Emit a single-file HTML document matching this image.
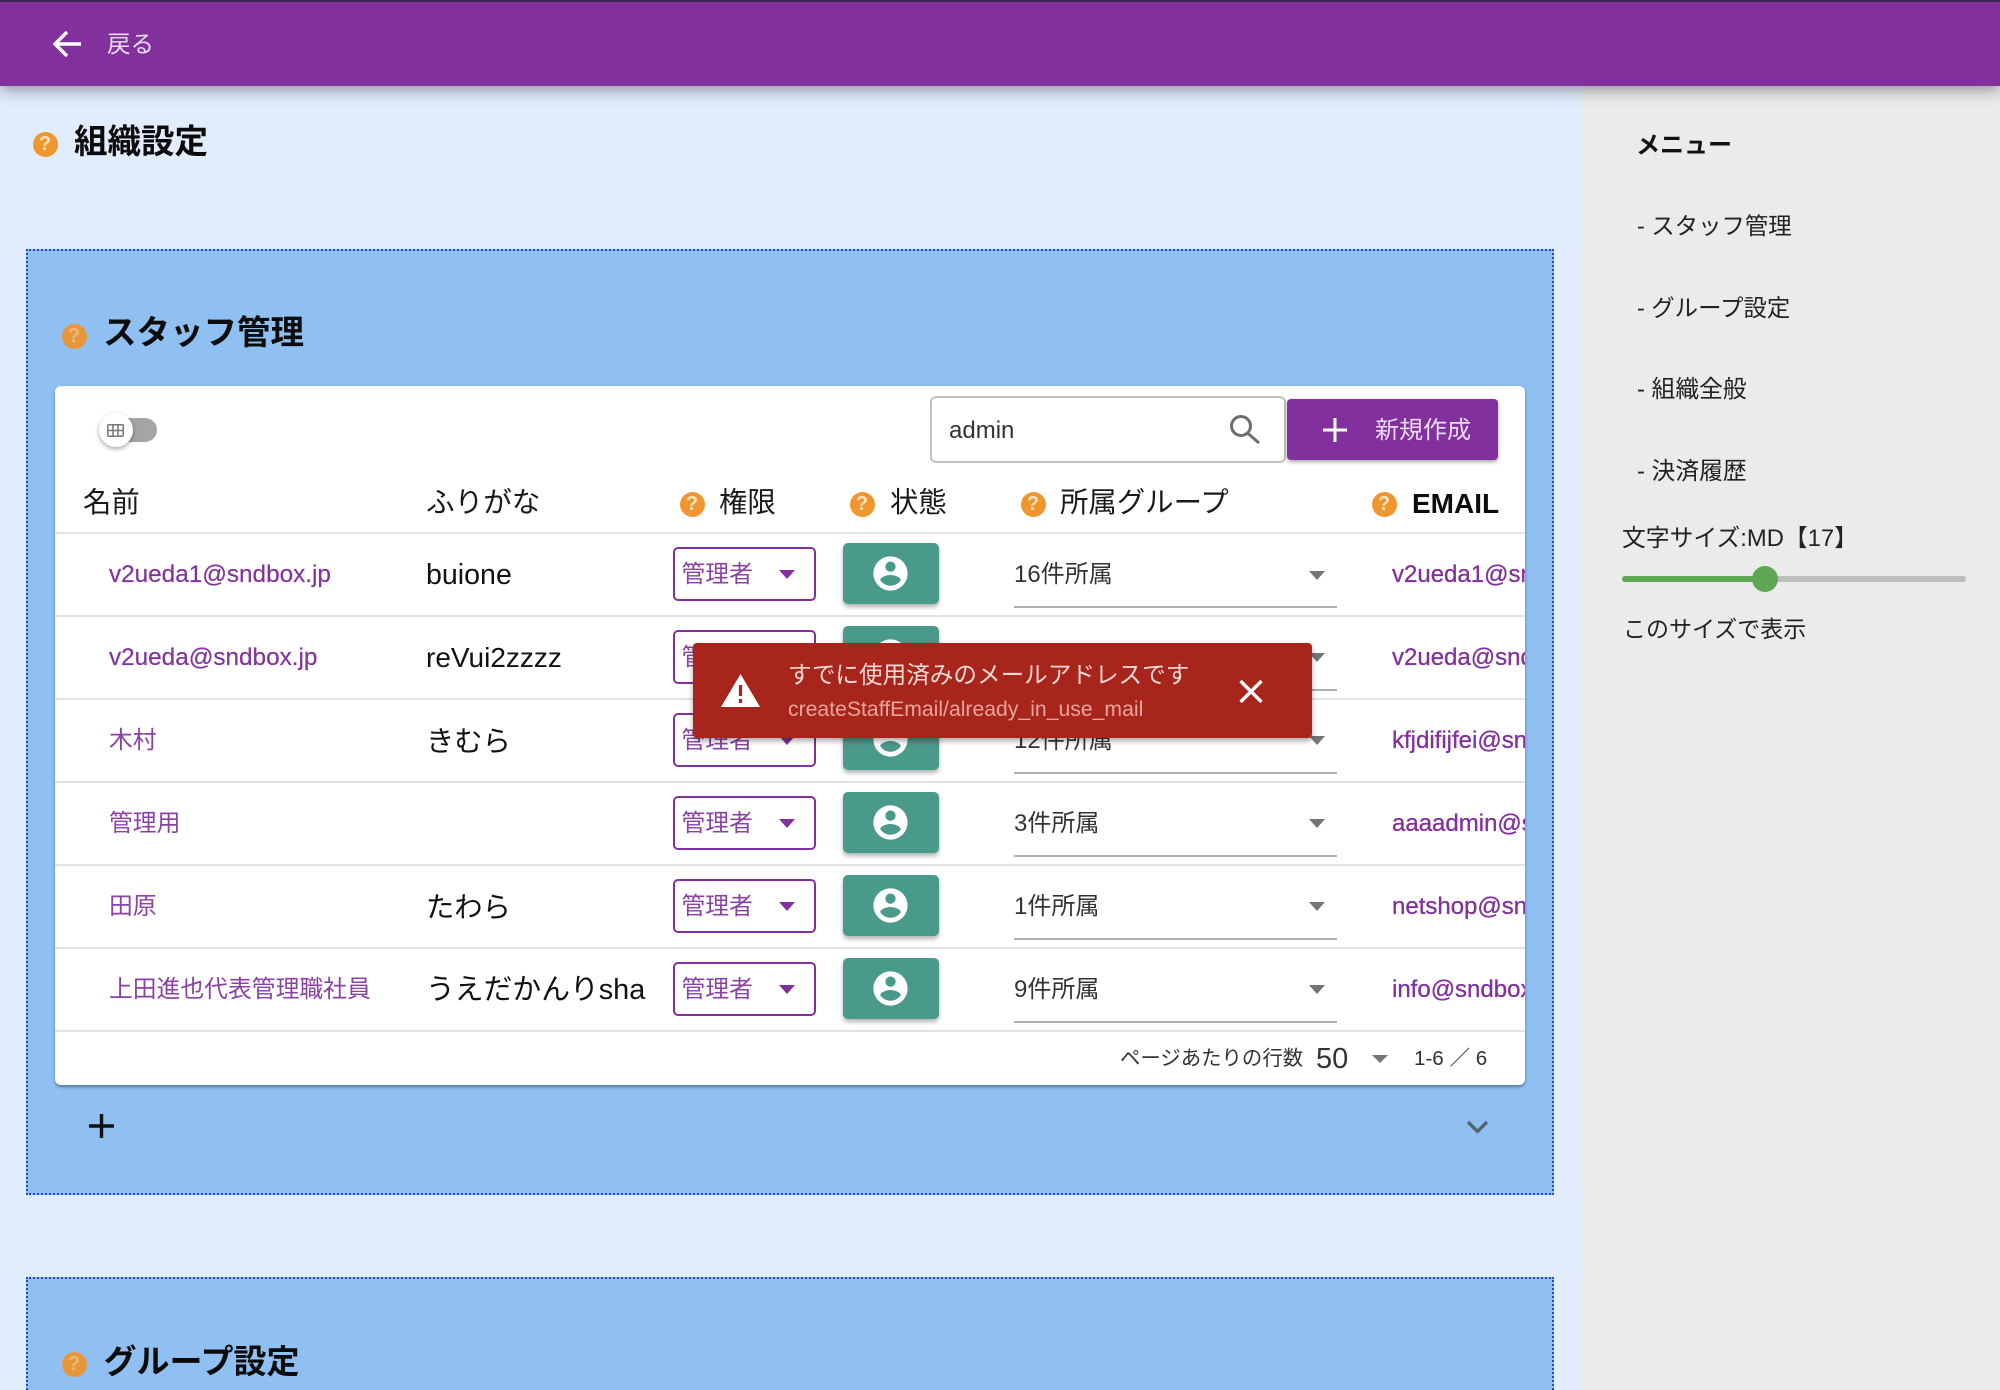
<!DOCTYPE html>
<html lang="ja"><head><meta charset="utf-8"><title>組織設定</title>
<style>
html,body{margin:0;padding:0;width:2000px;height:1390px;overflow:hidden;background:#e1edfc;font-family:"Liberation Sans","Noto Sans CJK JP",sans-serif;color:#111}
*{box-sizing:border-box}
.wrap{position:relative;width:2000px;height:1390px;overflow:hidden;background:#e1edfc}
.a,.t,.h{position:absolute}
.t{white-space:nowrap;line-height:1}
.hdr{left:0;top:0;width:2000px;height:86px;background:#82309e;border-top:2px solid #3a2a55;box-shadow:0 4px 14px rgba(60,60,70,.5);z-index:5}
.side{left:1582px;top:86px;width:418px;height:1304px;background:#ebebeb}
.sec{left:25.5px;width:1528.5px;background:#90c0f2;border:2px dotted #2748c4}
.h{width:25px;height:25px;border-radius:50%;background:#f0962f;color:#fbe3c0;font-size:20px;font-weight:700;line-height:25px;text-align:center}
.h2{background:#e9963b;color:#f0b878}
.title{font-size:33.5px;font-weight:700;color:#0c0c0c}
.card{left:55px;top:386px;width:1470px;height:699px;background:#fff;border-radius:6px;box-shadow:0 2px 3px rgba(40,60,80,.55)}
.th{font-size:28.4px;color:#1a1a1a}
.r{position:absolute;left:0;width:2000px;height:83px}
.sep{position:absolute;left:55px;width:1470px;height:2px;background:#e2e2e2}
.nm{left:109px;top:30px;font-size:23.8px;color:#8a42a4}
.nl{font-size:24.3px;color:#83339d;-webkit-text-stroke:.2px #83339d}
.fu{left:426px;top:28px;font-size:28.3px;color:#111}
.sel{position:absolute;left:672.500px;top:14px;width:143px;height:54px;border:2px solid #82309e;border-radius:5px;background:#fff}
.sel span{position:absolute;left:7px;top:13px;font-size:23.8px;line-height:26px;color:#8a42a4;white-space:nowrap}
.sel i{position:absolute;left:104px;top:21px;width:0;height:0;border-left:8px solid transparent;border-right:8px solid transparent;border-top:9px solid #82309e}
.st{position:absolute;left:843px;top:10px;width:96px;height:61px;background:#4a9a8c;border-radius:5px;box-shadow:0 3px 5px rgba(0,0,0,.3)}
.st svg{position:absolute;left:27px;top:10px;width:41px;height:41px;fill:#fff}
.gr{left:1014px;top:30px;font-size:24px;color:#333}
.ga{position:absolute;left:1309px;top:37.500px;width:0;height:0;border-left:8px solid transparent;border-right:8px solid transparent;border-top:9px solid #757575}
.gu{position:absolute;left:1014px;top:73px;width:323px;height:2px;background:#b0b0b0}
.em{position:absolute;left:1392px;top:27px;width:133px;height:30px;overflow:hidden;white-space:nowrap;font-size:24px;line-height:30px;color:#82309e;-webkit-text-stroke:.3px #82309e}
.mn{left:1637px;font-size:23.4px;color:#222}
</style></head><body>
<div class="wrap">

<div class="a hdr">
<svg class="a" style="left:51px;top:26px" width="32" height="32" viewBox="0 0 32 32" fill="none" stroke="#fff" stroke-width="3.4"><path d="M30 16H5M16 4L4 16l12 12"/></svg>
<div class="t" style="left:107px;top:31px;font-size:23.5px;color:#ecdcf2">戻る</div>
</div>

<div class="a side"></div>

<div class="h" style="left:32.5px;top:132px">?</div>
<div class="t title" style="left:74px;top:125.500px">組織設定</div>

<div class="a sec" style="top:249px;height:946px"></div>
<div class="a sec" style="top:1277px;height:140px"></div>

<div class="h h2" style="left:61.5px;top:323.500px">?</div>
<div class="t title" style="left:103px;top:317px">スタッフ管理</div>

<div class="h h2" style="left:61.5px;top:1351.500px">?</div>
<div class="t title" style="left:103.500px;top:1344.500px;font-size:33px">グループ設定</div>

<div class="a card"></div>

<!-- toggle -->
<div class="a" style="left:115px;top:418px;width:42px;height:24px;background:#a5a5a5;border-radius:12px"></div>
<div class="a" style="left:99px;top:413px;width:34px;height:34px;background:#fff;border-radius:50%;box-shadow:0 2px 5px rgba(0,0,0,.35)"></div>
<svg class="a" style="left:107px;top:424px" width="17" height="13" viewBox="0 0 17 13" fill="none" stroke="#777" stroke-width="1.5"><rect x=".8" y=".8" width="15.4" height="11.4" rx="1"/><path d="M6 1v11M11 1v11M1 6.500h15"/></svg>

<!-- search -->
<div class="a" style="left:930px;top:396px;width:356px;height:67px;border:2px solid #c2c2c2;border-radius:6px;background:#fff"></div>
<div class="t" style="left:949px;top:419px;font-size:24px;color:#333">admin</div>
<svg class="a" style="left:1229px;top:414px" width="32" height="30" viewBox="0 0 32 30" fill="none" stroke="#6e6e6e" stroke-width="3"><circle cx="12" cy="12" r="9.500"/><path d="M18.500 19L30 29"/></svg>

<!-- create -->
<div class="a" style="left:1287px;top:399px;width:211px;height:61px;background:#82309e;border-radius:4px;box-shadow:0 2px 4px rgba(0,0,0,.35)"></div>
<svg class="a" style="left:1322px;top:417px" width="26" height="26" viewBox="0 0 26 26" stroke="#fff" stroke-width="3"><path d="M13 1v24M1 13h24"/></svg>
<div class="t" style="left:1375px;top:418.500px;font-size:24px;color:#ecdcf2">新規作成</div>

<!-- head -->
<div class="t th" style="left:83px;top:489px">名前</div>
<div class="t th" style="left:426px;top:489px;font-size:28.6px">ふりがな</div>
<div class="h" style="left:679.5px;top:492px">?</div>
<div class="t th" style="left:719px;top:489px">権限</div>
<div class="h" style="left:849.5px;top:492px">?</div>
<div class="t th" style="left:890px;top:489px">状態</div>
<div class="h" style="left:1020.5px;top:492px">?</div>
<div class="t th" style="left:1060px;top:489px">所属グループ</div>
<div class="h" style="left:1371.5px;top:492px">?</div>
<div class="t" style="left:1412px;top:490px;font-size:28px;font-weight:700;color:#0c0c0c">EMAIL</div>

<div class="sep" style="top:532px"></div>

<div class="r" style="top:533px">
<div class="t nm nl">v2ueda1@sndbox.jp</div><div class="t fu" style="font-size:28.6px">buione</div>
<div class="sel"><span>管理者</span><i></i></div>
<div class="st"><svg viewBox="0 0 24 24"><path d="M12 2C6.480 2 2 6.480 2 12s4.480 10 10 10 10-4.480 10-10S17.520 2 12 2zm0 3c1.660 0 3 1.340 3 3s-1.340 3-3 3-3-1.340-3-3 1.340-3 3-3zm0 14.200c-2.500 0-4.710-1.280-6-3.220.030-1.990 4-3.080 6-3.080 1.990 0 5.970 1.090 6 3.080-1.290 1.940-3.500 3.220-6 3.220z"/></svg></div>
<div class="t gr">16件所属</div><div class="ga"></div><div class="gu"></div>
<div class="em">v2ueda1@sndbox.jp</div>
<div class="sep" style="top:82px"></div>
</div>

<div class="r" style="top:615.9px">
<div class="t nm nl">v2ueda@sndbox.jp</div><div class="t fu" style="font-size:28px">reVui2zzzz</div>
<div class="sel"><span>管理者</span><i></i></div>
<div class="st"><svg viewBox="0 0 24 24"><path d="M12 2C6.480 2 2 6.480 2 12s4.480 10 10 10 10-4.480 10-10S17.520 2 12 2zm0 3c1.660 0 3 1.340 3 3s-1.340 3-3 3-3-1.340-3-3 1.340-3 3-3zm0 14.200c-2.500 0-4.710-1.280-6-3.220.030-1.990 4-3.080 6-3.080 1.990 0 5.970 1.090 6 3.080-1.290 1.940-3.500 3.220-6 3.220z"/></svg></div>
<div class="t gr">2件所属</div><div class="ga"></div><div class="gu"></div>
<div class="em">v2ueda@sndbox.jp</div>
<div class="sep" style="top:82px"></div>
</div>

<div class="r" style="top:698.8px">
<div class="t nm">木村</div><div class="t fu">きむら</div>
<div class="sel"><span>管理者</span><i></i></div>
<div class="st"><svg viewBox="0 0 24 24"><path d="M12 2C6.480 2 2 6.480 2 12s4.480 10 10 10 10-4.480 10-10S17.520 2 12 2zm0 3c1.660 0 3 1.340 3 3s-1.340 3-3 3-3-1.340-3-3 1.340-3 3-3zm0 14.200c-2.500 0-4.710-1.280-6-3.220.030-1.990 4-3.080 6-3.080 1.990 0 5.970 1.090 6 3.080-1.290 1.940-3.500 3.220-6 3.220z"/></svg></div>
<div class="t gr">12件所属</div><div class="ga"></div><div class="gu"></div>
<div class="em">kfjdifijfei@sndbox.jp</div>
<div class="sep" style="top:82px"></div>
</div>

<div class="r" style="top:781.7px">
<div class="t nm">管理用</div>
<div class="sel"><span>管理者</span><i></i></div>
<div class="st"><svg viewBox="0 0 24 24"><path d="M12 2C6.480 2 2 6.480 2 12s4.480 10 10 10 10-4.480 10-10S17.520 2 12 2zm0 3c1.660 0 3 1.340 3 3s-1.340 3-3 3-3-1.340-3-3 1.340-3 3-3zm0 14.200c-2.500 0-4.710-1.280-6-3.220.030-1.990 4-3.080 6-3.080 1.990 0 5.970 1.090 6 3.080-1.290 1.940-3.500 3.220-6 3.220z"/></svg></div>
<div class="t gr">3件所属</div><div class="ga"></div><div class="gu"></div>
<div class="em">aaaadmin@sndbox.jp</div>
<div class="sep" style="top:82px"></div>
</div>

<div class="r" style="top:864.6px">
<div class="t nm">田原</div><div class="t fu">たわら</div>
<div class="sel"><span>管理者</span><i></i></div>
<div class="st"><svg viewBox="0 0 24 24"><path d="M12 2C6.480 2 2 6.480 2 12s4.480 10 10 10 10-4.480 10-10S17.520 2 12 2zm0 3c1.660 0 3 1.340 3 3s-1.340 3-3 3-3-1.340-3-3 1.340-3 3-3zm0 14.200c-2.500 0-4.710-1.280-6-3.220.030-1.990 4-3.080 6-3.080 1.990 0 5.970 1.090 6 3.080-1.290 1.940-3.500 3.220-6 3.220z"/></svg></div>
<div class="t gr">1件所属</div><div class="ga"></div><div class="gu"></div>
<div class="em">netshop@sndbox.jp</div>
<div class="sep" style="top:82px"></div>
</div>

<div class="r" style="top:947.5px">
<div class="t nm" style="font-size:23.8px;top:30.500px">上田進也代表管理職社員</div><div class="t fu" style="font-size:28.800px">うえだかんりsha</div>
<div class="sel"><span>管理者</span><i></i></div>
<div class="st"><svg viewBox="0 0 24 24"><path d="M12 2C6.480 2 2 6.480 2 12s4.480 10 10 10 10-4.480 10-10S17.520 2 12 2zm0 3c1.660 0 3 1.340 3 3s-1.340 3-3 3-3-1.340-3-3 1.340-3 3-3zm0 14.200c-2.500 0-4.710-1.280-6-3.220.030-1.990 4-3.080 6-3.080 1.990 0 5.970 1.090 6 3.080-1.290 1.940-3.500 3.220-6 3.220z"/></svg></div>
<div class="t gr">9件所属</div><div class="ga"></div><div class="gu"></div>
<div class="em">info@sndbox.jp</div>
<div class="sep" style="top:82px"></div>
</div>

<!-- footer -->
<div class="t" style="left:1120px;top:1049px;font-size:20.4px;color:#333">ページあたりの行数</div>
<div class="t" style="left:1316px;top:1044.500px;font-size:29px;color:#333">50</div>
<div class="a" style="left:1372px;top:1055px;width:0;height:0;border-left:8px solid transparent;border-right:8px solid transparent;border-top:8px solid #757575"></div>
<div class="t" style="left:1414px;top:1049px;font-size:20.6px;color:#333">1-6 ／ 6</div>

<svg class="a" style="left:89px;top:1114px" width="25" height="24" viewBox="0 0 25 24" stroke="#111" stroke-width="3.4"><path d="M12.500 0v24M0 12h25"/></svg>
<svg class="a" style="left:1466px;top:1120px" width="23" height="14" viewBox="0 0 23 14" fill="none" stroke="#556475" stroke-width="3.4"><path d="M2 2l9.500 9.500L21 2"/></svg>

<!-- toast -->
<div class="a" style="left:693px;top:643px;width:619px;height:95px;background:#a8251c;border-radius:4px;box-shadow:0 3px 6px rgba(0,0,0,.35);z-index:6">
<svg class="a" style="left:28px;top:31px" width="39" height="33" viewBox="0 0 39 33"><path d="M19.500 0L39 33H0z" fill="#fff"/><path d="M19.500 11v11M19.500 25v4" stroke="#a8251c" stroke-width="3.200"/></svg>
<div class="t" style="left:95px;top:22px;font-size:23.6px;color:#f5d9d5">すでに使用済みのメールアドレスです</div>
<div class="t" style="left:95px;top:56px;font-size:21.2px;color:#e8a59c">createStaffEmail/already_in_use_mail</div>
<svg class="a" style="left:546px;top:37px" width="24" height="23" viewBox="0 0 24 23" stroke="#fff" stroke-width="3.400"><path d="M1.500 1l21 21M22.500 1l-21 21"/></svg>
</div>

<!-- sidebar -->
<div class="t mn" style="top:134px;left:1636px;font-size:24px;font-weight:700;color:#111">メニュー</div>
<div class="t mn" style="top:215px">- スタッフ管理</div>
<div class="t mn" style="top:296.500px">- グループ設定</div>
<div class="t mn" style="top:377.500px;font-size:23.8px">- 組織全般</div>
<div class="t mn" style="top:459.500px;font-size:23.8px">- 決済履歴</div>
<div class="t" style="left:1622px;top:527px;font-size:23.8px;color:#222">文字サイズ:MD【17】</div>
<div class="a" style="left:1622px;top:576px;width:344px;height:6px;background:#bdbdbd;border-radius:3px"></div>
<div class="a" style="left:1622px;top:576px;width:143px;height:6px;background:#5fa655;border-radius:3px"></div>
<div class="a" style="left:1752px;top:566px;width:26px;height:26px;background:#5fa655;border-radius:50%"></div>
<div class="t" style="left:1623px;top:617.500px;font-size:23px;color:#222">このサイズで表示</div>

</div>
</body></html>
